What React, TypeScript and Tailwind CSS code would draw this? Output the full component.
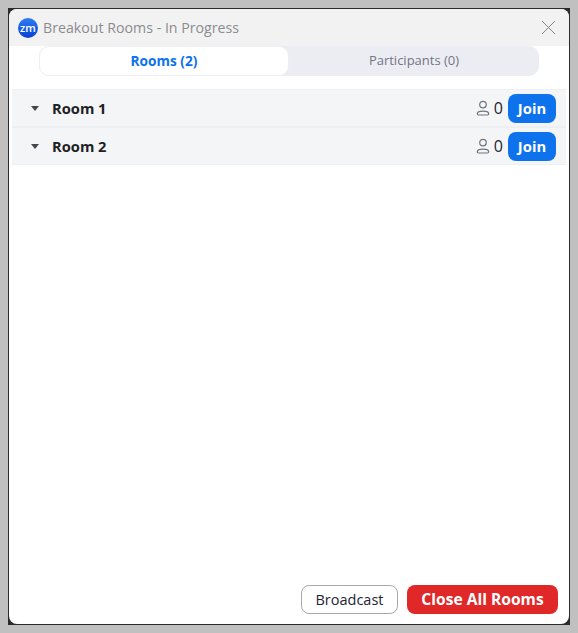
import { X } from "lucide-react";

function ZoomLogo() {
  return (
    <div className="flex h-5 w-5 items-center justify-center rounded-full bg-gradient-to-b from-[#2f7df6] to-[#0b3fd0]">
      <span className="text-[11px] leading-none font-semibold text-white">zm</span>
    </div>
  );
}

function PersonIcon() {
  return (
    <svg width="14" height="16" viewBox="0 0 14 16" fill="none" stroke="#6e7680" strokeWidth="1.2">
      <circle cx="7" cy="4.6" r="3.3" />
      <path d="M2.6 15h8.8c.8 0 1.3-.5 1.3-1.2 0-1.8-2-2.7-5.7-2.7s-5.7.9-5.7 2.7c0 .7.5 1.2 1.3 1.2z" />
    </svg>
  );
}

function RoomRow({ name }: { name: string }) {
  return (
    <div className="flex items-center bg-[#f4f5f7] py-[3px] pr-[10px] pl-[19px]">
      <div className="h-0 w-0 border-x-[4px] border-t-[5px] border-x-transparent border-t-[#45454d]" />
      <span className="ml-[13px] text-[14.7px] font-bold text-[#1f1f26]">{name}</span>
      <div className="ml-auto flex items-center gap-[4px]">
        <PersonIcon />
        <span className="text-[16px] text-[#1f2430]">0</span>
      </div>
      <button className="mt-px ml-[5px] h-[29px] w-[48px] rounded-lg bg-[#0e72ed] text-[14.8px] font-bold text-white">
        Join
      </button>
    </div>
  );
}

export default function App() {
  return (
    <div className="h-[633px] w-[578px] bg-[#c0c0c0] pt-2 pl-2 font-['Open_Sans',sans-serif]">
      <div className="h-[617px] w-[562px] bg-[#2b2b2b] pt-px pr-px pb-px pl-px">
        <div className="flex h-full w-full flex-col overflow-hidden rounded-lg bg-white">
          <div className="flex h-[37px] shrink-0 items-center bg-[#f2f2f3] pr-[8px] pl-[9px]">
            <ZoomLogo />
            <span className="ml-[5px] text-[14.2px] text-[#8c8c8f]">Breakout Rooms - In Progress</span>
            <X className="ml-auto text-[#7d7d80]" size={25} strokeWidth={0.9} />
          </div>

          <div className="mx-[30px] flex h-[30px] shrink-0 rounded-[10px] bg-[#ecedf2]">
            <div className="flex w-[250px] items-center justify-center rounded-[10px] border border-[#eeeef4] bg-white text-[13.7px] font-bold text-[#0e72ed]">
              Rooms (2)
            </div>
            <div className="flex flex-1 items-center justify-center text-[13px] text-[#747487]">
              Participants (0)
            </div>
          </div>

          <div className="mx-[3px] mt-[13px] divide-y-2 divide-[#eeeff2] border-y border-[#eeeff2]">
            <RoomRow name="Room 1" />
            <RoomRow name="Room 2" />
          </div>

          <div className="mt-auto flex justify-end gap-[9px] pr-[11px] pb-[10px]">
            <button className="h-[29px] w-[97px] rounded-lg border border-[#a8a8ac] bg-white text-[14.5px] text-[#232333]">
              Broadcast
            </button>
            <button className="h-[29px] w-[151px] rounded-lg bg-[#e02828] text-[15.6px] font-bold text-white">
              Close All Rooms
            </button>
          </div>
        </div>
      </div>
    </div>
  );
}
